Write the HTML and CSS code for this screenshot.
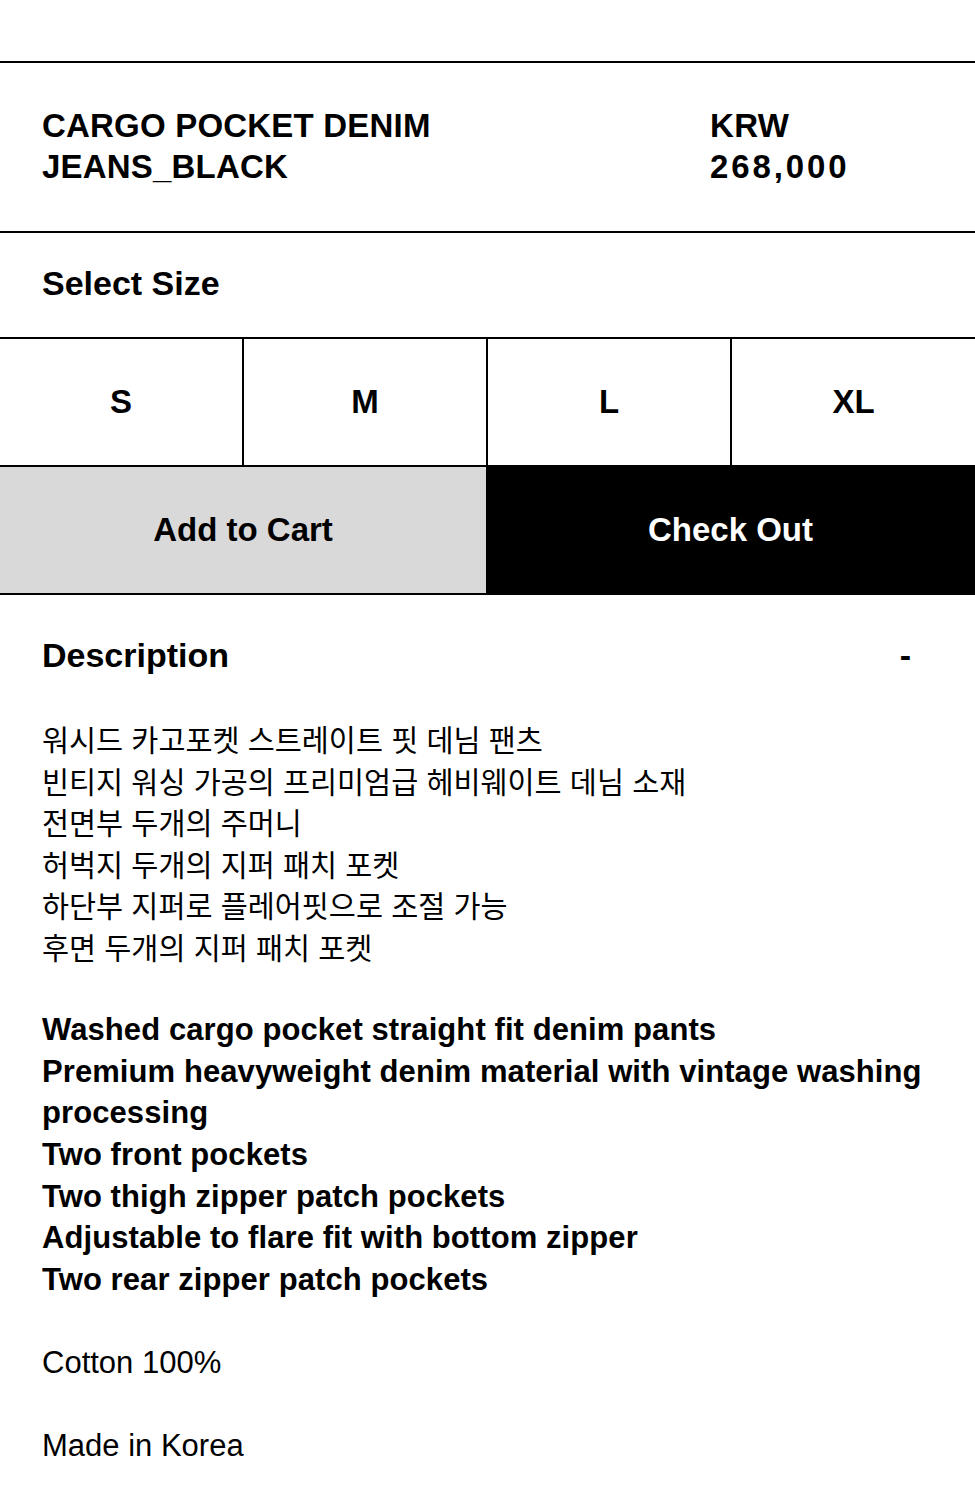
FILE: index.html
```html
<!DOCTYPE html>
<html lang="ko">
<head>
<meta charset="utf-8">
<title>CARGO POCKET DENIM JEANS_BLACK</title>
<link rel="stylesheet" href="styles.css">
</head>
<body>
<div class="top-space"></div>
<section class="product-head">
  <h1 class="product-name">CARGO POCKET DENIM<br>JEANS_BLACK</h1>
  <div class="product-price"><span class="currency">KRW</span><span class="amount">268,000</span></div>
</section>
<section class="size-label">Select Size</section>
<div class="size-row">
  <button class="size-cell">S</button>
  <button class="size-cell">M</button>
  <button class="size-cell">L</button>
  <button class="size-cell">XL</button>
</div>
<div class="action-row">
  <button class="btn btn-cart">Add to Cart</button>
  <button class="btn btn-checkout">Check Out</button>
</div>
<section class="description">
  <div class="desc-head">
    <span class="desc-title">Description</span>
    <span class="desc-toggle">-</span>
  </div>
  <div class="desc-body">
    <p class="ko">워시드 카고포켓 스트레이트 핏 데님 팬츠<br>빈티지 워싱 가공의 프리미엄급 헤비웨이트 데님 소재<br>전면부 두개의 주머니<br>허벅지 두개의 지퍼 패치 포켓<br>하단부 지퍼로 플레어핏으로 조절 가능<br>후면 두개의 지퍼 패치 포켓</p>
    <p class="en">Washed cargo pocket straight fit denim pants<br>Premium heavyweight denim material with vintage washing processing<br>Two front pockets<br>Two thigh zipper patch pockets<br>Adjustable to flare fit with bottom zipper<br>Two rear zipper patch pockets</p>
    <p class="plain">Cotton 100%</p>
    <p class="plain">Made in Korea</p>
  </div>
</section>
</body>
</html>
```

FILE: styles.css
```css
* { box-sizing: border-box; }

body {
  margin: 0;
  background: #fff;
  color: #000;
  font-family: "Liberation Sans", "Noto Sans CJK KR", Arial, sans-serif;
}

.top-space { height: 61px; }

.product-head {
  border-top: 2px solid #000;
  border-bottom: 2px solid #000;
  display: flex;
  padding: 42px 0 44px 42px;
  line-height: 41px;
  font-weight: 700;
}

.product-name {
  margin: 0;
  width: 668px;
  font-size: 33px;
  font-weight: 700;
  letter-spacing: 0.2px;
}

.product-price {
  display: flex;
  flex-direction: column;
  font-size: 33px;
  letter-spacing: 0.4px;
}

.amount { letter-spacing: 2.9px; }

.size-label {
  padding: 30px 42px 33px;
  font-size: 34px;
  line-height: 41px;
  font-weight: 700;
}

.size-row {
  display: grid;
  grid-template-columns: 242px 244px 244px 1fr;
  border-top: 2px solid #000;
  border-bottom: 2px solid #000;
}

.size-cell {
  height: 126px;
  border: 0;
  border-left: 2px solid #000;
  background: #fff;
  color: #000;
  font-family: inherit;
  font-size: 33px;
  font-weight: 700;
  padding: 0;
}

.size-cell:first-child { border-left: 0; }

.action-row {
  display: grid;
  grid-template-columns: 486px 1fr;
  border-bottom: 2px solid #000;
}

.btn {
  height: 126px;
  border: 0;
  font-family: inherit;
  font-size: 33px;
  font-weight: 700;
  padding: 0;
}

.btn-cart { background: #d9d9d9; color: #000; }
.btn-checkout { background: #000; color: #fff; }

.description {
  padding: 40px 0 40px 42px;
}

.desc-head {
  display: flex;
  justify-content: space-between;
  padding-right: 64px;
  font-size: 34px;
  line-height: 41px;
  font-weight: 700;
}

.desc-body {
  margin-top: 42px;
  font-size: 31px;
  line-height: 41.6px;
}

.desc-body p { margin: 0 0 41.6px; }

.ko {
  font-family: "Noto Sans CJK KR", "Liberation Sans", sans-serif;
  font-size: 29.4px;
}

.en { font-weight: 700; letter-spacing: 0.08px; }
```
